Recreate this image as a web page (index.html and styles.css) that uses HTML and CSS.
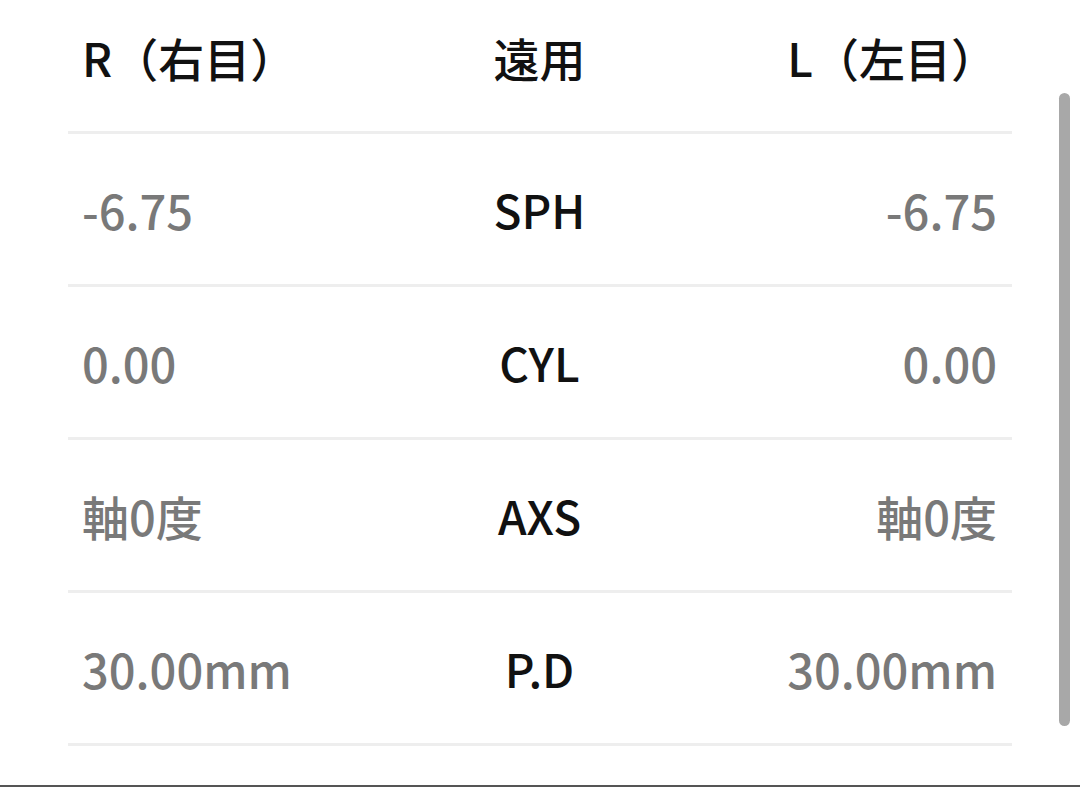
FILE: index.html
```html
<!DOCTYPE html>
<html lang="ja">
<head>
<meta charset="utf-8">
<link rel="stylesheet" href="styles.css">
</head>
<body>
<div class="screen">
  <div class="table">
    <div class="row head">
      <div class="cell left label">R（右目）</div>
      <div class="cell mid label">遠用</div>
      <div class="cell right label">L（左目）</div>
    </div>
    <div class="row">
      <div class="cell left value">-6.75</div>
      <div class="cell mid label">SPH</div>
      <div class="cell right value">-6.75</div>
    </div>
    <div class="row">
      <div class="cell left value">0.00</div>
      <div class="cell mid label">CYL</div>
      <div class="cell right value">0.00</div>
    </div>
    <div class="row">
      <div class="cell left value">軸0度</div>
      <div class="cell mid label">AXS</div>
      <div class="cell right value">軸0度</div>
    </div>
    <div class="row">
      <div class="cell left value">30.00mm</div>
      <div class="cell mid label">P.D</div>
      <div class="cell right value">30.00mm</div>
    </div>
  </div>
  <div class="scrollbar"></div>
  <div class="spacer"></div>
  <div class="edge"></div>
</div>
</body>
</html>
```
FILE: styles.css
```css
html, body {
  margin: 0;
  padding: 0;
  background: #ffffff;
}
body {
  width: 1080px;
  height: 787px;
  overflow: hidden;
  font-family: "Noto Sans CJK JP", "Noto Sans", sans-serif;
}
.screen {
  position: relative;
  width: 1080px;
  height: 787px;
  display: flex;
  flex-direction: column;
}
.table {
  margin: 0 68px;
  display: flex;
  flex-direction: column;
}
.row {
  display: grid;
  grid-template-columns: 1fr auto 1fr;
  align-items: center;
  height: 150px;
  border-bottom: 3px solid #eeeeee;
  padding: 0 15px 0 14px;
}
.row.head {
  box-sizing: border-box;
  height: 134px;
  padding-bottom: 17px;
}
.cell {
  white-space: nowrap;
  line-height: 1;
}
.left { text-align: left; }
.mid { text-align: center; }
.right { text-align: right; }
.label {
  font-size: 46px;
  font-weight: 500;
  color: #111111;
}
.value {
  font-size: 47px;
  font-weight: 500;
  color: #797979;
}
.scrollbar {
  position: absolute;
  left: 1059px;
  top: 93px;
  width: 11px;
  height: 633px;
  border-radius: 6px;
  background: #a8a8a8;
}
.spacer { flex: 1; }
.edge {
  height: 2px;
  background: #555555;
}
```
